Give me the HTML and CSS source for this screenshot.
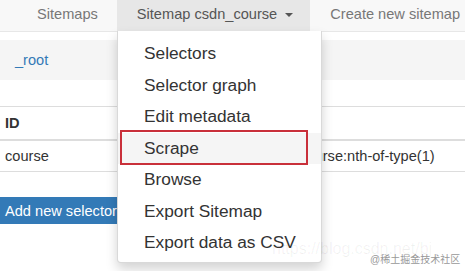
FILE: index.html
```html
<!DOCTYPE html>
<html lang="en">
<head>
    <meta charset="UTF-8">
    <title>Web Scraper</title>
    <link rel="stylesheet" href="styles.css">
</head>
<body>
    <nav class="navbar">
        <ul class="nav">
            <li><a href="#">Sitemaps</a></li>
            <li class="active"><a href="#">Sitemap csdn_course <span class="caret"></span></a></li>
            <li><a href="#">Create new sitemap</a></li>
        </ul>
    </nav>

    <div class="page">
        <div class="breadcrumb">
            <a href="#">_root</a>
        </div>

        <table class="selectors">
            <thead>
                <tr>
                    <th class="col-id">ID</th>
                    <th></th>
                </tr>
            </thead>
            <tbody>
                <tr>
                    <td class="col-id">course</td>
                    <td>div.course-list .course:nth-of-type(1)</td>
                </tr>
            </tbody>
        </table>

        <button class="btn-primary">Add new selector</button>
    </div>

    <ul class="dropdown">
        <li><a href="#">Selectors</a></li>
        <li><a href="#">Selector graph</a></li>
        <li><a href="#">Edit metadata</a></li>
        <li class="hover"><a href="#">Scrape</a><span class="mark"></span></li>
        <li><a href="#">Browse</a></li>
        <li><a href="#">Export Sitemap</a></li>
        <li><a href="#">Export data as CSV</a></li>
    </ul>

    <div class="watermark">
        <span class="url">https://blog.csdn.net/bj</span>
        <span class="site">@稀土掘金技术社区</span>
    </div>
</body>
</html>
```

FILE: styles.css
```css
body {
    font-family: "Liberation Sans", Arial, "Noto Sans CJK SC", sans-serif;
    font-size: 14.6px;
    color: #333;
    margin: 0;
    padding: 0;
    background: white;
    position: relative;
    height: 271px;
    overflow: hidden;
}

a {
    text-decoration: none;
}

.navbar {
    height: 31px;
    background: #f8f8f8;
    border-bottom: 1px solid #e7e7e7;
}

.nav {
    display: flex;
    margin: 0 0 0 17px;
    padding: 0;
    list-style: none;
}

.nav li {
    flex-shrink: 0;
}

.nav a {
    display: block;
    line-height: 29px;
    padding: 0 19px 2px 20px;
    color: #777;
    font-size: 14.6px;
    white-space: nowrap;
}

.nav .active a {
    background: #e7e7e7;
    color: #555;
    padding-right: 17px;
}

.caret {
    display: inline-block;
    width: 0;
    height: 0;
    margin-left: 4px;
    vertical-align: middle;
    border-top: 4px solid #555;
    border-left: 4px solid transparent;
    border-right: 4px solid transparent;
}

.page {
    padding-top: 8px;
}

.breadcrumb {
    height: 40px;
    line-height: 40px;
    background: #f5f5f5;
    padding-left: 15px;
}

.breadcrumb a {
    color: #337ab7;
}

.selectors {
    width: 100%;
    margin-top: 26px;
    border-collapse: collapse;
}

.selectors th,
.selectors td {
    text-align: left;
    padding: 0 5px;
    border-top: 1px solid #ddd;
    white-space: nowrap;
}

.selectors th {
    height: 32px;
    border-bottom: 2px solid #ddd;
    font-weight: bold;
}

.selectors td {
    height: 30px;
    border-top: none;
    border-bottom: 1px solid #ddd;
}

.selectors .col-id {
    width: 188px;
}

.btn-primary {
    display: block;
    margin-top: 25px;
    height: 27px;
    padding: 0 5px;
    background: #337ab7;
    border: none;
    color: white;
    font-family: inherit;
    font-size: 14.6px;
    white-space: nowrap;
}

.dropdown {
    position: absolute;
    top: 31px;
    left: 117px;
    width: 203px;
    margin: 0;
    padding: 7px 0 3px;
    list-style: none;
    background: white;
    border: 1px solid rgba(0, 0, 0, 0.15);
    border-top: none;
    border-radius: 0 0 4px 4px;
    box-shadow: 0 6px 12px rgba(0, 0, 0, 0.175);
}

.dropdown li {
    position: relative;
}

.dropdown a {
    display: block;
    height: 31.5px;
    line-height: 31.5px;
    padding: 0 26px;
    color: #333;
    font-size: 17.3px;
    white-space: nowrap;
}

.dropdown .hover a {
    background: #f5f5f5;
}

.mark {
    position: absolute;
    top: -3px;
    bottom: -1px;
    left: 2px;
    right: 13px;
    border: 2px solid #c9303a;
}

.watermark .url {
    position: absolute;
    left: 272px;
    top: 240px;
    font-size: 16px;
    color: rgba(0, 0, 0, 0.06);
    white-space: nowrap;
}

.watermark .site {
    position: absolute;
    left: 370px;
    top: 251px;
    font-size: 10px;
    color: #999;
    white-space: nowrap;
}
```
